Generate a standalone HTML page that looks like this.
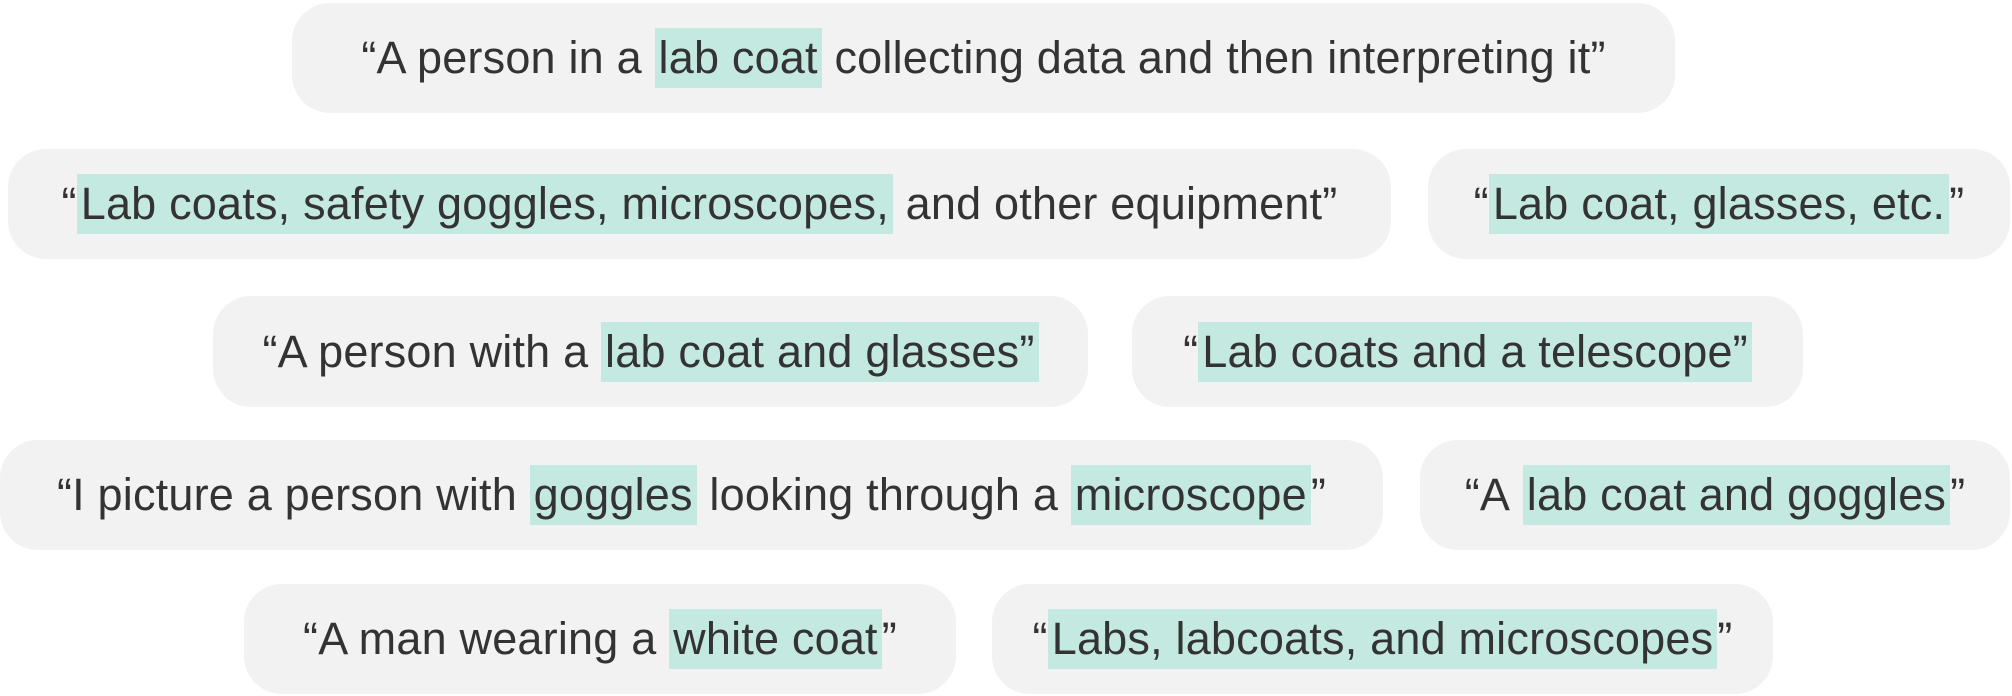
<!DOCTYPE html>
<html><head><style>
body{margin:0;width:2012px;height:696px;background:#fff;position:relative;overflow:hidden;font-family:"Liberation Sans",sans-serif;color:#333;}
.b{position:absolute;background:#f2f2f2;border-radius:38px;display:flex;align-items:center;justify-content:center;white-space:nowrap;font-size:45px;letter-spacing:0.2px}
.h{background:#c4e9e0;display:inline-block;line-height:60px;height:60px;padding:0 4px}
</style></head><body>
<div class="b" style="left:292px;top:3px;width:1383px;height:110px">“A person in a&nbsp;<span class="h">lab coat</span>&nbsp;collecting data and then interpreting it”</div>
<div class="b" style="left:8px;top:149px;width:1383px;height:110px">“<span class="h">Lab coats, safety goggles, microscopes,</span>&nbsp;and other equipment”</div>
<div class="b" style="left:1428px;top:149px;width:582px;height:110px">“<span class="h">Lab coat, glasses, etc.</span>”</div>
<div class="b" style="left:213px;top:296px;width:875px;height:111px">“A person with a&nbsp;<span class="h">lab coat and glasses”</span></div>
<div class="b" style="left:1132px;top:296px;width:671px;height:111px">“<span class="h">Lab coats and a telescope”</span></div>
<div class="b" style="left:0px;top:440px;width:1383px;height:110px">“I picture a person with&nbsp;<span class="h">goggles</span>&nbsp;looking through a&nbsp;<span class="h">microscope</span>”</div>
<div class="b" style="left:1420px;top:440px;width:590px;height:110px">“A&nbsp;<span class="h">lab coat and goggles</span>”</div>
<div class="b" style="left:244px;top:584px;width:712px;height:110px">“A man wearing a&nbsp;<span class="h">white coat</span>”</div>
<div class="b" style="left:992px;top:584px;width:781px;height:110px">“<span class="h">Labs, labcoats, and microscopes</span>”</div>
</body></html>
